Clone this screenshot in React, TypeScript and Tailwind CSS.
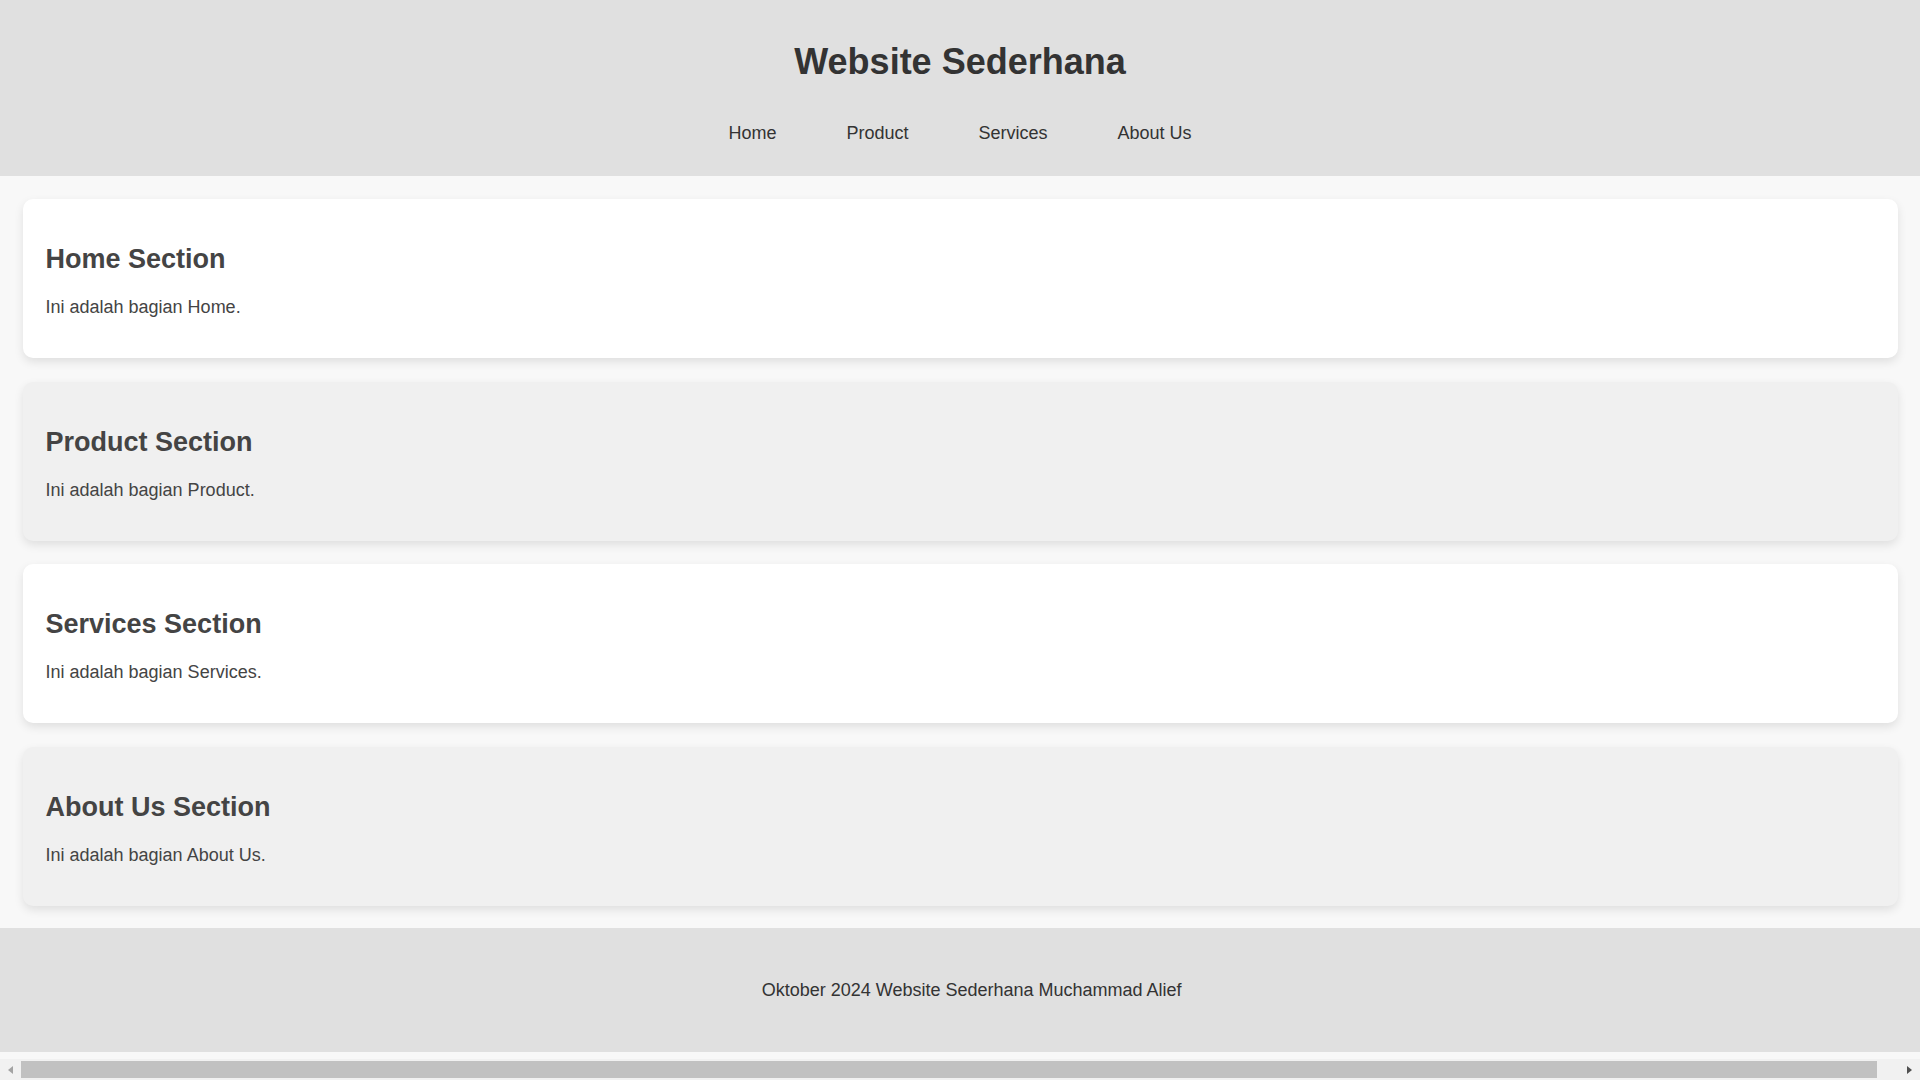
const links = ["Home", "Product", "Services", "About Us"];

const sections = [
  { title: "Home Section", text: "Ini adalah bagian Home.", bg: "bg-white" },
  { title: "Product Section", text: "Ini adalah bagian Product.", bg: "bg-[#f0f0f0]" },
  { title: "Services Section", text: "Ini adalah bagian Services.", bg: "bg-white" },
  { title: "About Us Section", text: "Ini adalah bagian About Us.", bg: "bg-[#f0f0f0]" },
];

function Scrollbar() {
  return (
    <div className="fixed inset-x-0 bottom-0 flex h-[21px] items-center bg-[#f1f1f1]">
      <div className="flex h-full w-[21px] items-center justify-center">
        <div className="h-0 w-0 border-y-[4.5px] border-r-[5px] border-y-transparent border-r-[#a3a3a3]" />
      </div>
      <div className="h-[17px] flex-1 bg-[#c1c1c1]" />
      <div className="w-[22px]" />
      <div className="flex h-full w-[21px] items-center justify-center">
        <div className="h-0 w-0 border-y-[4.5px] border-l-[5px] border-y-transparent border-l-[#505050]" />
      </div>
    </div>
  );
}

export default function App() {
  return (
    <div className="min-h-screen w-full overflow-x-hidden bg-[#f8f8f8] font-['Liberation_Sans',Arial,sans-serif] text-[18px] text-[#333]">
      <header className="bg-[#e0e0e0] pb-[32.4px] pt-[41px] text-center">
        <h1 className="text-[36px] font-bold leading-[41px] text-[#333]">Website Sederhana</h1>
        <nav className="mt-[40.6px]">
          <ul className="flex justify-center gap-[70px] leading-[21px]">
            {links.map((l) => (
              <li key={l}>
                <a href={`#${l}`} className="text-[#333]">
                  {l}
                </a>
              </li>
            ))}
          </ul>
        </nav>
      </header>

      <main className="flex flex-col gap-[23.5px] pb-[22px] pl-[23px] pr-[22px] pt-[23.5px]">
        {sections.map((s) => (
          <section
            key={s.title}
            className={`rounded-[10px] px-[22.5px] pb-[22px] pt-[24px] shadow-[0_4px_10px_rgba(0,0,0,0.1)] ${s.bg}`}
          >
            <h2 className="mb-[22px] mt-[21px] text-[27px] font-bold leading-[31px] text-[#444]">{s.title}</h2>
            <p className="mb-[18px] leading-[21px] text-[#444]">{s.text}</p>
          </section>
        ))}
      </main>

      <footer className="box-content w-full bg-[#e0e0e0] px-[11.6px] pb-[50.5px] pt-[52.5px] text-center leading-[21px] text-[#333]">
        Oktober 2024 Website Sederhana Muchammad Alief
      </footer>

      <Scrollbar />
    </div>
  );
}
